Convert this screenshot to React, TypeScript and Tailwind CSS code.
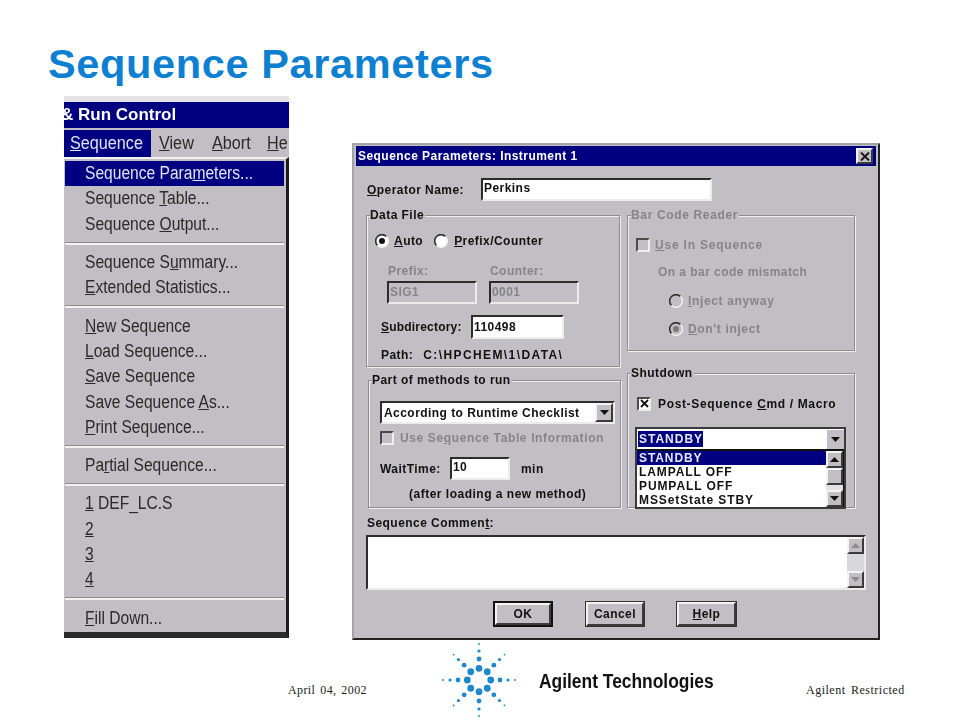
import React from "react";

const sans = "font-['Liberation_Sans',Arial,sans-serif]";
const sunken = "border-2 border-t-[#2c2c2c] border-l-[#2c2c2c] border-r-[#ececec] border-b-[#ececec]";
const raised = "border-2 border-t-[#f4f4f4] border-l-[#f4f4f4] border-r-[#3a3a3a] border-b-[#3a3a3a]";

function Radio({ checked, disabled }: { checked?: boolean; disabled?: boolean }) {
  return (
    <svg width="14" height="14" viewBox="0 0 14 14" className="shrink-0">
      <circle cx="7" cy="7" r="6" fill={disabled ? "#c1bfc3" : "#ffffff"} />
      <path d="M2.5 11.5A6.3 6.3 0 0 1 11.5 2.5" fill="none" stroke="#303030" strokeWidth="1.6" />
      <path d="M2.5 11.5A6.3 6.3 0 0 0 11.5 2.5" fill="none" stroke="#f2f2f2" strokeWidth="1.4" />
      {checked && <circle cx="7" cy="7" r="3" fill={disabled ? "#7a7a7a" : "#111111"} />}
    </svg>
  );
}

function Check({ checked, disabled }: { checked?: boolean; disabled?: boolean }) {
  return (
    <span className={`w-[14px] h-[14px] shrink-0 flex items-center justify-center border-2 border-t-[#4a4a4a] border-l-[#4a4a4a] border-r-[#eeeeee] border-b-[#eeeeee] ${disabled ? "bg-[#c1bfc3]" : "bg-white"}`}>
      {checked && (
        <svg width="9" height="9" viewBox="0 0 9 9">
          <path d="M1 1L8 8M8 1L1 8" stroke="#111111" strokeWidth="1.8" />
        </svg>
      )}
    </span>
  );
}

function Arrow({ up, color = "#111111" }: { up?: boolean; color?: string }) {
  return (
    <svg width="9" height="5" viewBox="0 0 9 5">
      <polygon points={up ? "4.5,0 9,5 0,5" : "0,0 9,0 4.5,5"} fill={color} />
    </svg>
  );
}

function Group({ title, disabled, className, children }: { title: string; disabled?: boolean; className: string; children: React.ReactNode }) {
  return (
    <div className={`relative border border-[#8e8e90] shadow-[1px_1px_0_#f0f0f0,inset_1px_1px_0_#eeeeee] ${className}`}>
      <span className={`absolute left-[3px] top-[-8px] bg-[#c1bfc3] pr-[1px] h-[15px] leading-[15px] whitespace-nowrap ${disabled ? "text-[#858587]" : "text-[#111111]"}`}>{title}</span>
      {children}
    </div>
  );
}

function MenuRow({ children, active }: { children: React.ReactNode; active?: boolean }) {
  return (
    <div className={`h-[25.3px] flex items-center pl-[20px] mr-[2px] whitespace-nowrap ${active ? "bg-[#000080] text-[#dfe3f0]" : "text-[#2a2a2a]"}`}>
      <span className="inline-block origin-left scale-x-[0.866]">{children}</span>
    </div>
  );
}

function Sep() {
  return (
    <div className="h-[13px] flex flex-col justify-center mr-[2px]">
      <div className="h-[1px] bg-[#8c8c8c]" />
      <div className="h-[2px] bg-[#f2f2f2]" />
    </div>
  );
}

function Button({ children, main, className }: { children: React.ReactNode; main?: boolean; className: string }) {
  return (
    <div className={`h-[26px] flex items-center justify-center ${main ? "border-[2px] border-[#111111]" : "border border-[#333333]"} ${className}`}>
      <div className={`w-full h-full flex items-center justify-center ${raised}`}>{children}</div>
    </div>
  );
}

function ScrollBtn({ up, color, className }: { up?: boolean; color?: string; className?: string }) {
  return (
    <div className={`w-[18px] flex items-center justify-center bg-[#c1bfc3] ${raised} ${className ?? ""}`}>
      <Arrow up={up} color={color} />
    </div>
  );
}

function Logo() {
  const rings: [number, number][] = [[11.7, 3.4], [21, 2.4], [29, 1.6], [36, 0.9]];
  const dots: React.ReactNode[] = [];
  for (let a = 0; a < 8; a++) {
    rings.forEach(([rad, r], i) => {
      const t = (a * Math.PI) / 4;
      dots.push(<circle key={`${a}-${i}`} cx={38 + rad * Math.cos(t)} cy={38 + rad * Math.sin(t)} r={r} fill="#1d87cf" />);
    });
  }
  return (
    <svg width="76" height="76" viewBox="0 0 76 76" className="shrink-0">
      {dots}
    </svg>
  );
}

export default function App() {
  return (
    <div className={`w-[960px] h-[720px] bg-white overflow-hidden flex flex-col ${sans}`}>
      <div className="h-[96px] pl-[48px] pt-[41px] shrink-0">
        <h1 className="text-[41.5px] leading-[46px] font-bold text-[#0e80d2] tracking-[0.63px] whitespace-nowrap">Sequence Parameters</h1>
      </div>

      <div className="h-[544px] shrink-0 flex items-start pl-[64px]">
        {/* Left: menu capture */}
        <div className="w-[225px] h-[542px] flex flex-col shrink-0 bg-[#c1bfc3] text-[18px] blur-[0.3px]">
          <div className="h-[6px] bg-[#e4e4e6]" />
          <div className="h-[26px] bg-[#000080] text-white font-bold text-[17px] leading-[26px] whitespace-nowrap overflow-hidden"><span className="inline-block ml-[-3px]">&amp; Run Control</span></div>
          <div className="h-[2px]" />
          <div className="h-[27px] flex items-center whitespace-nowrap overflow-hidden text-[#2a2a2a]">
            <div className="w-[87px] h-full bg-[#000080] text-[#dfe3f0] flex items-center pl-[6px] shrink-0"><span className="inline-block origin-left scale-x-[0.9]"><u>S</u>equence</span></div>
            <div className="w-[61px] pl-[8px] shrink-0"><span className="inline-block origin-left scale-x-[0.9]"><u>V</u>iew</span></div>
            <div className="w-[55px] shrink-0"><span className="inline-block origin-left scale-x-[0.9]"><u>A</u>bort</span></div>
            <span className="inline-block origin-left scale-x-[0.9]"><u>H</u>e</span>
          </div>
          <div className="relative flex-1 flex flex-col border-t-2 border-t-[#f2f2f2] border-r-[3px] border-r-[#1c1c1c] border-b-[6px] border-b-[#2a2a2a] pl-[1px] pt-[2px]">
            <MenuRow active>Sequence Para<u>m</u>eters...</MenuRow>
            <MenuRow>Sequence <u>T</u>able...</MenuRow>
            <MenuRow>Sequence <u>O</u>utput...</MenuRow>
            <Sep />
            <MenuRow>Sequence S<u>u</u>mmary...</MenuRow>
            <MenuRow><u>E</u>xtended Statistics...</MenuRow>
            <Sep />
            <MenuRow><u>N</u>ew Sequence</MenuRow>
            <MenuRow><u>L</u>oad Sequence...</MenuRow>
            <MenuRow><u>S</u>ave Sequence</MenuRow>
            <MenuRow>Save Sequence <u>A</u>s...</MenuRow>
            <MenuRow><u>P</u>rint Sequence...</MenuRow>
            <Sep />
            <MenuRow>Pa<u>r</u>tial Sequence...</MenuRow>
            <Sep />
            <MenuRow><u>1</u> DEF_LC.S</MenuRow>
            <MenuRow><u>2</u></MenuRow>
            <MenuRow><u>3</u></MenuRow>
            <MenuRow><u>4</u></MenuRow>
            <Sep />
            <MenuRow><u>F</u>ill Down...</MenuRow>
          </div>
        </div>

        {/* Right: dialog */}
        <div className="w-[528px] h-[497px] ml-[63px] mt-[47px] shrink-0 bg-[#c1bfc3] border-t-2 border-l-2 border-t-[#a4a4a6] border-l-[#a4a4a6] border-r-[2px] border-b-[2px] border-r-[#222222] border-b-[#222222] text-[12px] tracking-[0.45px] font-bold text-[#111111] flex flex-col blur-[0.3px]">
          <div className="mx-[2px] mt-[1px] h-[20px] bg-[#000080] text-white text-[12px] flex items-center pl-[2px] pr-[3px] justify-between shrink-0">
            <span className="whitespace-nowrap">Sequence Parameters: Instrument 1</span>
            <span className={`w-[17px] h-[16px] bg-[#c1bfc3] flex items-center justify-center ${raised}`}>
              <svg width="10" height="9" viewBox="0 0 10 9"><path d="M1 0.5L9 8.5M9 0.5L1 8.5" stroke="#111111" strokeWidth="1.8" /></svg>
            </span>
          </div>

          <div className="flex items-center mt-[12px] h-[23px] pl-[13px] shrink-0">
            <span className="w-[114px] whitespace-nowrap"><u>O</u>perator Name:</span>
            <div className={`w-[231px] h-[23px] bg-white pl-[1px] leading-[17px] ${sunken}`}>Perkins</div>
          </div>

          <div className="flex mt-[14px] pl-[12px] shrink-0">
            <div className="w-[256px] flex flex-col shrink-0">
              <Group title="Data File" className="w-[254px] h-[152px] pl-[8px] flex flex-col">
                <div className="flex items-center mt-[17px] h-[16px]">
                  <Radio checked />
                  <span className="ml-[5px]"><u>A</u>uto</span>
                  <span className="ml-[11px]"><Radio /></span>
                  <span className="ml-[6px] whitespace-nowrap"><u>P</u>refix/Counter</span>
                </div>
                <div className="flex mt-[15px] ml-[13px] text-[#858587] h-[14px] leading-[14px]">
                  <span className="w-[102px]">Prefix:</span>
                  <span>Counter:</span>
                </div>
                <div className="flex mt-[3px] ml-[12px] gap-[12px]">
                  <div className={`w-[90px] h-[23px] pl-[1px] leading-[19px] text-[#858587] ${sunken}`}>SIG1</div>
                  <div className={`w-[90px] h-[23px] pl-[1px] leading-[19px] text-[#858587] ${sunken}`}>0001</div>
                </div>
                <div className="flex items-center mt-[11px] ml-[6px]">
                  <span className="w-[90px] whitespace-nowrap tracking-[0.2px]"><u>S</u>ubdirectory:</span>
                  <div className={`w-[93px] h-[24px] pl-[1px] bg-white leading-[20px] ${sunken}`}>110498</div>
                </div>
                <div className="flex mt-[9px] ml-[6px] h-[15px] leading-[15px] whitespace-nowrap tracking-[1.4px]">
                  <span className="tracking-[0.45px]">Path:</span>
                  <span className="ml-[10px]">C:\HPCHEM\1\DATA\</span>
                </div>
              </Group>

              <Group title="Part of methods to run" className="w-[253px] h-[128px] mt-[13px] ml-[2px] pl-[11px] flex flex-col">
                <div className={`w-[235px] h-[23px] mt-[20px] bg-white flex items-center justify-between ${sunken}`}>
                  <span className="pl-[2px] whitespace-nowrap">According to Runtime Checklist</span>
                  <ScrollBtn className="h-[19px] w-[17px]" />
                </div>
                <div className="flex items-center mt-[6px] h-[15px]">
                  <Check disabled />
                  <span className="ml-[6px] text-[#858587] whitespace-nowrap tracking-[0.63px]">Use Se<u>q</u>uence Table Information</span>
                </div>
                <div className="flex items-center mt-[12px]">
                  <span className="w-[70px]">WaitTime:</span>
                  <div className={`w-[60px] h-[23px] pl-[1px] bg-white leading-[17px] ${sunken}`}>10</div>
                  <span className="ml-[11px]">min</span>
                </div>
                <div className="mt-[7px] ml-[29px] h-[15px] leading-[15px] whitespace-nowrap tracking-[0.5px]">(after loading a new method)</div>
              </Group>
            </div>

            <div className="w-[228px] ml-[5px] flex flex-col shrink-0 text-[12px]">
              <Group title="Bar Code Reader" disabled className="w-[228px] h-[136px] pl-[8px] flex flex-col text-[#858587] tracking-[0.65px]">
                <div className="flex items-center mt-[21px] h-[15px]">
                  <Check disabled />
                  <span className="ml-[5px] tracking-[0.8px]"><u>U</u>se In Sequence</span>
                </div>
                <div className="mt-[13px] ml-[22px] h-[15px] leading-[15px] tracking-[0.45px]">On a bar code mismatch</div>
                <div className="flex items-center mt-[13px] ml-[33px] h-[15px]">
                  <Radio disabled />
                  <span className="ml-[5px]"><u>I</u>nject anyway</span>
                </div>
                <div className="flex items-center mt-[13px] ml-[33px] h-[15px]">
                  <Radio checked disabled />
                  <span className="ml-[5px]"><u>D</u>on't inject</span>
                </div>
              </Group>

              <Group title="Shutdown" className="w-[228px] h-[135px] mt-[22px] pl-[7px] flex flex-col">
                <div className="flex items-center mt-[22px] ml-[2px] h-[15px]">
                  <Check checked />
                  <span className="ml-[7px] whitespace-nowrap tracking-[0.65px]">Post-Sequence <u>C</u>md / Macro</span>
                </div>
                <div className="w-[211px] mt-[16px] flex flex-col border-2 border-[#3a3a3a] bg-white">
                  <div className="h-[20px] flex items-center justify-between">
                    <span className="bg-[#000080] text-[#e6e8f4] h-[16px] leading-[16px] ml-[1px] pl-[1px] tracking-[1px]">STANDBY</span>
                    <span className="w-[17px] h-[19px] bg-[#c1bfc3] flex items-center justify-center"><Arrow /></span>
                  </div>
                  <div className="h-[58px] flex border-t-2 border-t-[#111111] tracking-[0.9px]">
                    <div className="flex-1 flex flex-col leading-[14px]">
                      <div className="h-[14px] bg-[#000080] text-[#e6e8f4] pl-[2px]">STANDBY</div>
                      <div className="h-[14px] pl-[2px]">LAMPALL OFF</div>
                      <div className="h-[14px] pl-[2px]">PUMPALL OFF</div>
                      <div className="h-[14px] pl-[2px]">MSSetState STBY</div>
                    </div>
                    <div className="w-[18px] flex flex-col bg-[#e2e2e4] border-r border-r-[#111111]">
                      <ScrollBtn up className="h-[17px] w-full" />
                      <div className={`h-[17px] bg-[#c1bfc3] ${raised}`} />
                      <div className="flex-1" />
                      <ScrollBtn className="h-[17px] w-full" />
                    </div>
                  </div>
                </div>
              </Group>
            </div>
          </div>

          <div className="mt-[8px] ml-[13px] h-[15px] leading-[15px] whitespace-nowrap shrink-0">Sequence Commen<u>t</u>:</div>
          <div className={`mt-[4px] ml-[12px] w-[500px] h-[55px] bg-white flex justify-end shrink-0 ${sunken}`}>
            <div className="w-[17px] h-full flex flex-col bg-[#d8d8da]">
              <ScrollBtn up color="#8c8c8e" className="h-[17px] w-full" />
              <div className="flex-1" />
              <ScrollBtn color="#8c8c8e" className="h-[17px] w-full" />
            </div>
          </div>

          <div className="flex mt-[11px] ml-[139px] shrink-0">
            <Button main className="w-[60px]">OK</Button>
            <Button className="w-[60px] ml-[32px]">Cancel</Button>
            <Button className="w-[61px] ml-[31px]"><span><u>H</u>elp</span></Button>
          </div>
        </div>
      </div>

      <div className="flex-1 flex items-start pl-[288px]">
        <span className="w-[153px] mt-[41px] font-['Liberation_Serif',serif] text-[12px] tracking-[0.4px] [word-spacing:1.5px] text-[#222222] whitespace-nowrap">April 04, 2002</span>
        <div className="mt-[2px]"><Logo /></div>
        <span className="inline-block origin-left scale-x-[0.87] w-[198px] shrink-0 ml-[22px] mt-[29px] font-bold text-[20px] leading-[24px] text-[#111111] whitespace-nowrap">Agilent Technologies</span>
        <span className="ml-[69px] mt-[41px] font-['Liberation_Serif',serif] text-[12px] tracking-[0.5px] [word-spacing:2px] text-[#222222] whitespace-nowrap">Agilent Restricted</span>
      </div>
    </div>
  );
}
